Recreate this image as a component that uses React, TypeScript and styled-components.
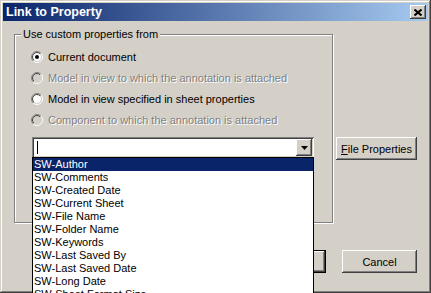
import React from 'react';
import styled, { createGlobalStyle } from 'styled-components';

const GlobalStyle = createGlobalStyle`
  html, body {
    margin: 0;
    padding: 0;
    overflow: hidden;
    background: #d4d0c8;
  }
  body {
    font-family: 'Liberation Sans', Arial, sans-serif;
    font-size: 11px;
    color: #000;
  }
`;

const raised = `
  box-shadow: inset -1px -1px #404040, inset 1px 1px #fff,
    inset -2px -2px #808080, inset 2px 2px #d4d0c8;
`;

const Window = styled.div`
  box-sizing: border-box;
  width: 431px;
  height: 293px;
  padding: 3px;
  background: #d4d0c8;
  box-shadow: inset -1px -1px #404040, inset 1px 1px #d4d0c8,
    inset -2px -2px #808080, inset 2px 2px #fff;
  display: flex;
  flex-direction: column;
`;

const TitleBar = styled.div`
  height: 18px;
  display: flex;
  align-items: center;
  justify-content: space-between;
  padding: 0 2px 0 3px;
  background: linear-gradient(to right, #0a246a, #a6caf0);
`;

const Title = styled.span`
  color: #fff;
  font-weight: bold;
  font-size: 12.5px;
  line-height: 18px;
`;

const CloseButton = styled.div`
  width: 16px;
  height: 14px;
  background: #d4d0c8;
  display: flex;
  align-items: center;
  justify-content: center;
  ${raised}
`;

const Body = styled.div`
  display: flex;
  flex-direction: column;
  padding: 13px 11px 0 11px;
`;

const TopRow = styled.div`
  display: flex;
  align-items: flex-start;
  gap: 3px;
`;

const GroupBox = styled.div`
  box-sizing: border-box;
  width: 319px;
  height: 189px;
  border: 1px solid #808080;
  box-shadow: inset 1px 1px #fff, 1px 1px #fff;
  display: flex;
  flex-direction: column;
`;

const Legend = styled.div`
  align-self: flex-start;
  margin: -7px 0 0 6px;
  padding: 0 2px;
  line-height: 13px;
  background: #d4d0c8;
`;

const RadioList = styled.div`
  display: flex;
  flex-direction: column;
  margin-top: 5px;
  padding-left: 16px;
`;

const RadioRow = styled.div<{ disabled?: boolean }>`
  height: 21px;
  display: flex;
  align-items: center;
  gap: 5px;
  color: ${(p) => (p.disabled ? '#808080' : '#000')};
  text-shadow: ${(p) => (p.disabled ? '1px 1px 0 #fff' : 'none')};
`;

const ComboWrap = styled.div`
  position: relative;
  width: 282px;
  height: 21px;
  margin: 7px 0 0 17px;
`;

const Combo = styled.div`
  box-sizing: border-box;
  height: 21px;
  padding: 2px;
  background: #fff;
  display: flex;
  align-items: center;
  box-shadow: inset 1px 1px #808080, inset -1px -1px #fff,
    inset 2px 2px #404040, inset -2px -2px #d4d0c8;
`;

const Caret = styled.div`
  width: 1px;
  height: 13px;
  margin-left: 3px;
  background: #000;
`;

const DropButton = styled.div`
  margin-left: auto;
  width: 16px;
  height: 17px;
  background: #d4d0c8;
  display: flex;
  align-items: center;
  justify-content: center;
  ${raised}
`;

const List = styled.div`
  position: absolute;
  top: 20px;
  left: 0;
  z-index: 10;
  box-sizing: border-box;
  width: 282px;
  border: 1px solid #000;
  background: #fff;
`;

const ListItem = styled.div<{ selected?: boolean }>`
  height: 13px;
  line-height: 13px;
  padding-left: 1px;
  white-space: nowrap;
  background: ${(p) => (p.selected ? '#0a246a' : '#fff')};
  color: ${(p) => (p.selected ? '#fff' : '#000')};
`;

const Button = styled.button<{ width: number; isDefault?: boolean }>`
  box-sizing: border-box;
  width: ${(p) => p.width}px;
  height: 23px;
  padding: 0;
  border: ${(p) => (p.isDefault ? '1px solid #000' : 'none')};
  background: #d4d0c8;
  font-family: 'Liberation Sans', Arial, sans-serif;
  font-size: 11px;
  color: #000;
  ${raised}
`;

const SideButton = styled(Button)`
  margin-top: 103px;
`;

const BottomRow = styled.div`
  display: flex;
  justify-content: flex-end;
  gap: 16px;
  margin-top: 27px;
`;

const RadioIcon = ({ checked, disabled }: { checked?: boolean; disabled?: boolean }) => (
  <svg width="12" height="12" viewBox="0 0 12 12" style={{ flex: 'none' }}>
    <defs>
      <linearGradient id="radioOuter" x1="0" y1="0" x2="1" y2="1">
        <stop offset="0.5" stopColor="#808080" />
        <stop offset="0.5" stopColor="#ffffff" />
      </linearGradient>
      <linearGradient id="radioInner" x1="0" y1="0" x2="1" y2="1">
        <stop offset="0.5" stopColor="#404040" />
        <stop offset="0.5" stopColor="#d4d0c8" />
      </linearGradient>
    </defs>
    <circle cx="6" cy="6" r="5.5" fill="none" stroke="url(#radioOuter)" />
    <circle cx="6" cy="6" r="4.5" fill={disabled ? '#d4d0c8' : '#fff'} stroke="url(#radioInner)" />
    {checked && <circle cx="6" cy="6" r="2" fill="#000" />}
  </svg>
);

const options = [
  { label: 'Current document', checked: true },
  { label: 'Model in view to which the annotation is attached', disabled: true },
  { label: 'Model in view specified in sheet properties' },
  { label: 'Component to which the annotation is attached', disabled: true },
];

const properties = [
  'SW-Author',
  'SW-Comments',
  'SW-Created Date',
  'SW-Current Sheet',
  'SW-File Name',
  'SW-Folder Name',
  'SW-Keywords',
  'SW-Last Saved By',
  'SW-Last Saved Date',
  'SW-Long Date',
  'SW-Sheet Format Size',
];

export default function App() {
  return (
    <>
      <GlobalStyle />
      <Window>
        <TitleBar>
          <Title>Link to Property</Title>
          <CloseButton>
            <svg width="8" height="7" viewBox="0 0 8 7">
              <path d="M0.5 0.5 L7.5 6.5 M7.5 0.5 L0.5 6.5" stroke="#000" strokeWidth="2" />
            </svg>
          </CloseButton>
        </TitleBar>
        <Body>
          <TopRow>
            <GroupBox>
              <Legend>Use custom properties from</Legend>
              <RadioList>
                {options.map((o) => (
                  <RadioRow key={o.label} disabled={o.disabled}>
                    <RadioIcon checked={o.checked} disabled={o.disabled} />
                    {o.label}
                  </RadioRow>
                ))}
              </RadioList>
              <ComboWrap>
                <Combo>
                  <Caret />
                  <DropButton>
                    <svg width="7" height="4" viewBox="0 0 7 4">
                      <polygon points="0,0 7,0 3.5,4" fill="#000" />
                    </svg>
                  </DropButton>
                </Combo>
                <List>
                  {properties.map((p, i) => (
                    <ListItem key={p} selected={i === 0}>
                      {p}
                    </ListItem>
                  ))}
                </List>
              </ComboWrap>
            </GroupBox>
            <SideButton width={81}>
              <u>F</u>ile Properties
            </SideButton>
          </TopRow>
          <BottomRow>
            <Button width={75} isDefault>
              OK
            </Button>
            <Button width={75}>Cancel</Button>
          </BottomRow>
        </Body>
      </Window>
    </>
  );
}
